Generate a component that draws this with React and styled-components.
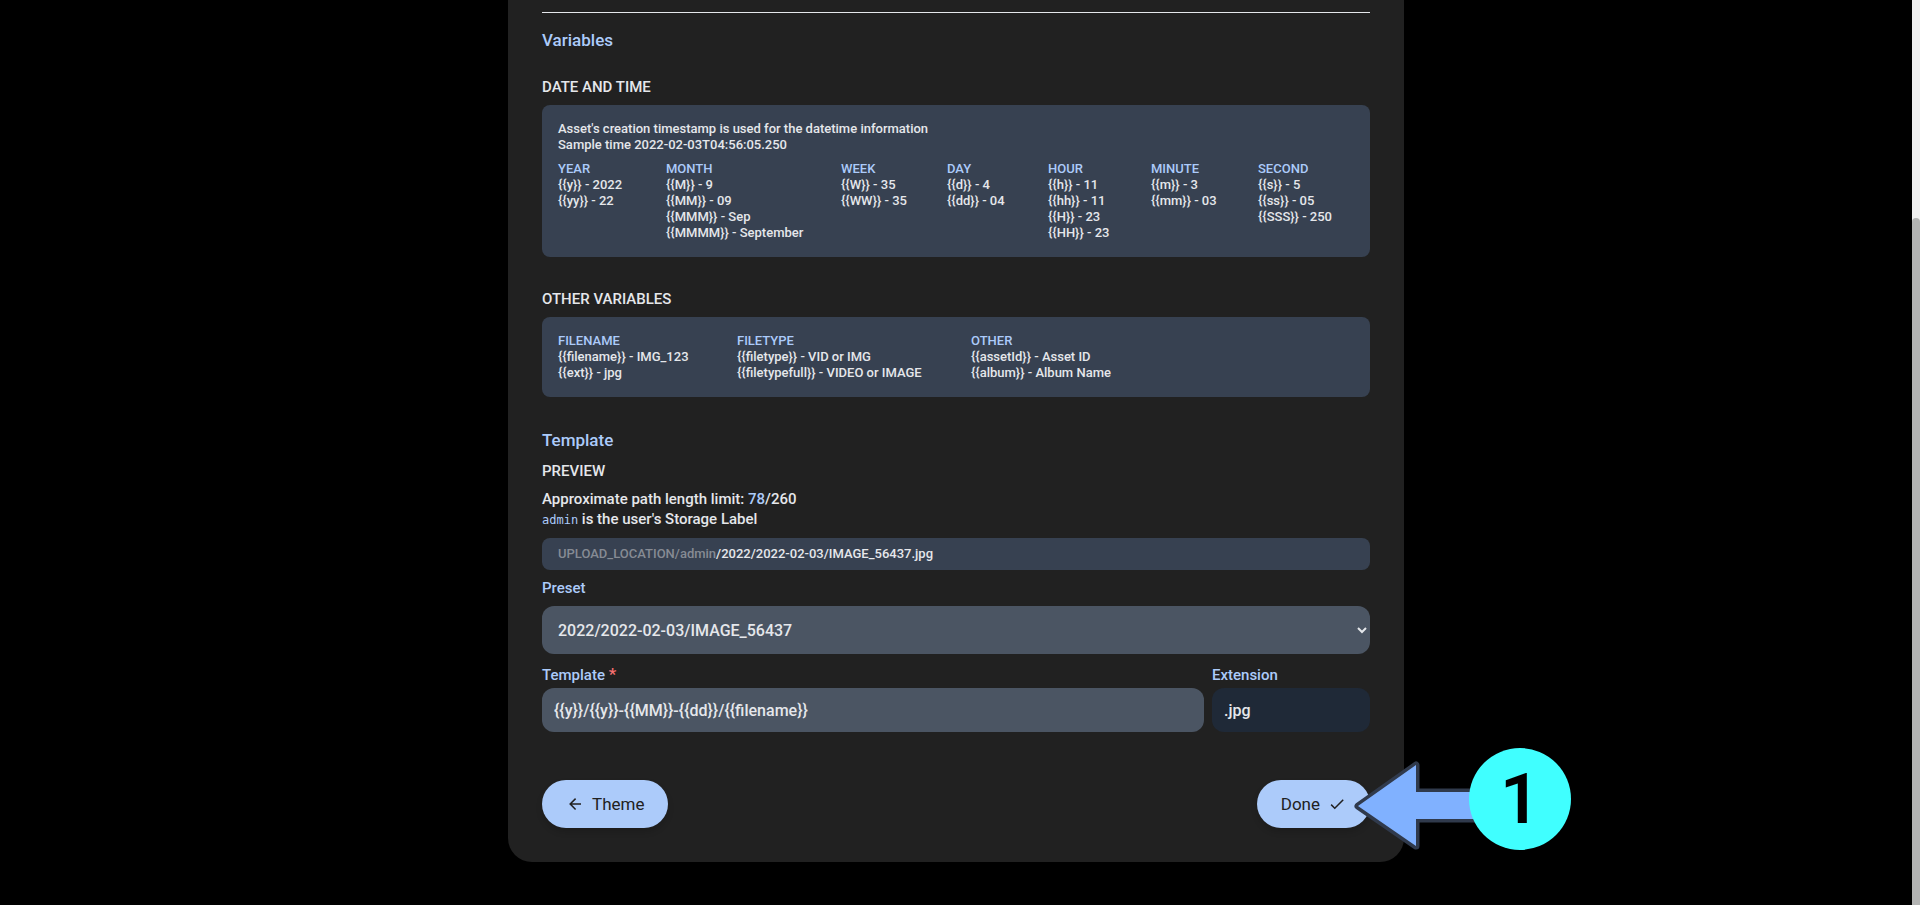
import React from 'react';
import styled, { createGlobalStyle } from 'styled-components';

const GlobalStyle = createGlobalStyle`
  *, *::before, *::after { box-sizing: border-box; }
  body {
    margin: 0;
    background: #000;
    color: #e5e7eb;
    font: 500 15px/22px Roboto, "Liberation Sans", sans-serif;
  }
  h2, h3, h4, p, ul { margin: 0; padding: 0; font-weight: inherit; }
  ul { list-style: none; }
  button, input, select { font: inherit; color: inherit; border: 0; }
`;

const primary = '#accbfa';

const Page = styled.div`
  display: flex;
  min-height: 100vh;
  overflow-x: hidden;
`;

const Main = styled.main`
  flex: 1;
  display: flex;
  align-items: flex-start;
  justify-content: center;
`;

const ScrollTrack = styled.div`
  display: flex;
  width: 8px;
  padding-top: 218px;
  background: #f1f1f1;
`;

const ScrollThumb = styled.div`
  flex: 1;
  border-radius: 16px 16px 0 0;
  background: #b3b4b3;
`;

const Card = styled.section`
  width: 100%;
  max-width: 896px;
  padding: 12px 34px 34px;
  border-radius: 0 0 24px 24px;
  background: #212121;
`;

const Divider = styled.hr`
  height: 1px;
  margin: 0 0 15px;
  border: 0;
  background: #e5e7eb;
`;

const Heading = styled.h2`
  color: ${primary};
  font-size: 17px;
  line-height: 24px;
`;

const Section = styled.section`
  display: flex;
  flex-direction: column;
  gap: 7px;
  margin-top: ${({ $space }) => $space}px;
`;

const TemplateBlock = styled.section`
  margin-top: 31px;
`;

const Caption = styled.h3`
  font-size: 15px;
  text-transform: uppercase;
`;

const Panel = styled.div`
  padding: 16px;
  border-radius: 8px;
  background: #374151;
  font-size: 13px;
  line-height: 16px;
`;

const Note = styled.div`
  margin-bottom: 8px;
`;

const Columns = styled.div`
  display: grid;
  grid-template-columns: ${({ $tracks }) => $tracks};
  white-space: nowrap;
`;

const ColumnTitle = styled.h4`
  color: ${primary};
  text-transform: uppercase;
`;

const PathInfo = styled.div`
  line-height: 20px;
`;

const Accent = styled.span`
  color: ${primary};
`;

const Code = styled.code`
  color: ${primary};
  font: 400 12px "DejaVu Sans Mono", monospace;
`;

const PathPreview = styled.p`
  padding: 8px 16px;
  margin-top: 2px;
  border-radius: 8px;
  background: #374151;
  font-size: 13px;
  line-height: 16px;
`;

const PathRoot = styled.span`
  color: #868b94;
`;

const Form = styled.form`
  display: flex;
  flex-direction: column;
  margin-top: 7px;
`;

const Label = styled.label`
  color: ${primary};
`;

const Required = styled.span`
  color: #f87171;
  font-size: 17px;
  line-height: 16px;
`;

const Select = styled.select`
  width: 100%;
  height: 48px;
  margin-top: 7px;
  padding: 12px;
  border-radius: 12px;
  background: #4b5563;
  font-size: 16px;
`;

const FieldRow = styled.div`
  display: flex;
  gap: 8px;
  margin-top: 10px;
`;

const Field = styled.div`
  display: flex;
  flex-direction: column;
  gap: 2px;
  flex: ${({ $grow }) => ($grow ? '1' : '0 0 158px')};
  min-width: 0;
`;

const Input = styled.input`
  width: 100%;
  height: 44px;
  padding: 12px;
  border-radius: 12px;
  background: ${({ disabled }) => (disabled ? '#1f2937' : '#4b5563')};
  font-size: 16px;
`;

const Actions = styled.div`
  display: flex;
  justify-content: space-between;
  margin-top: 48px;
`;

const Button = styled.button`
  display: flex;
  align-items: center;
  gap: 8px;
  height: 48px;
  padding: 0 24px;
  border-radius: 24px;
  background: ${primary};
  color: #212121;
  font-size: 17px;
  font-weight: 400;
  box-shadow: 0 4px 6px rgba(0, 0, 0, 0.15);
`;

const Icon = styled.svg`
  width: 18px;
  height: 18px;
  fill: currentColor;
`;

const DoneAnchor = styled.div`
  position: relative;
`;

const Callout = styled.div`
  position: absolute;
  top: -32px;
  left: calc(100% - 16px);
  display: flex;
  align-items: flex-start;
  pointer-events: none;
`;

const CalloutArrow = styled.svg`
  flex: none;
  width: 132px;
  height: 91px;
  margin: 12px -17px 0 0;
`;

const CalloutNumber = styled.span`
  position: relative;
  display: flex;
  align-items: center;
  justify-content: center;
  flex: none;
  width: 102px;
  height: 102px;
  border-radius: 50%;
  background: #40ffff;
  color: #000;
  font-size: 70px;
  font-weight: 600;
  line-height: 102px;
`;

const dateTime = [
  ['Year', '{{y}} - 2022', '{{yy}} - 22'],
  ['Month', '{{M}} - 9', '{{MM}} - 09', '{{MMM}} - Sep', '{{MMMM}} - September'],
  ['Week', '{{W}} - 35', '{{WW}} - 35'],
  ['Day', '{{d}} - 4', '{{dd}} - 04'],
  ['Hour', '{{h}} - 11', '{{hh}} - 11', '{{H}} - 23', '{{HH}} - 23'],
  ['Minute', '{{m}} - 3', '{{mm}} - 03'],
  ['Second', '{{s}} - 5', '{{ss}} - 05', '{{SSS}} - 250'],
];

const others = [
  ['Filename', '{{filename}} - IMG_123', '{{ext}} - jpg'],
  ['Filetype', '{{filetype}} - VID or IMG', '{{filetypefull}} - VIDEO or IMAGE'],
  ['Other', '{{assetId}} - Asset ID', '{{album}} - Album Name'],
];

function VariableColumns({ groups, tracks }) {
  return (
    <Columns $tracks={tracks}>
      {groups.map(([title, ...items]) => (
        <div key={title}>
          <ColumnTitle>{title}</ColumnTitle>
          <ul>
            {items.map((item) => (
              <li key={item}>{item}</li>
            ))}
          </ul>
        </div>
      ))}
    </Columns>
  );
}

export default function App() {
  return (
    <Page>
      <GlobalStyle />
      <Main>
        <Card>
          <Divider />
          <Heading>Variables</Heading>
          <Section $space={24}>
            <Caption>Date and time</Caption>
            <Panel>
              <Note>
                <p>Asset's creation timestamp is used for the datetime information</p>
                <p>Sample time 2022-02-03T04:56:05.250</p>
              </Note>
              <VariableColumns
                groups={dateTime}
                tracks="108px 175px 106px 101px 103px 107px 1fr"
              />
            </Panel>
          </Section>
          <Section $space={31}>
            <Caption>Other variables</Caption>
            <Panel>
              <VariableColumns groups={others} tracks="179px 234px 1fr" />
            </Panel>
          </Section>

          <TemplateBlock>
            <Heading>Template</Heading>
            <Section $space={8}>
              <Caption>Preview</Caption>
              <PathInfo>
                <p>
                  Approximate path length limit: <Accent>78</Accent>/260
                </p>
                <p>
                  <Code>admin</Code> is the user's Storage Label
                </p>
              </PathInfo>
              <PathPreview>
                <PathRoot>UPLOAD_LOCATION/admin</PathRoot>/2022/2022-02-03/IMAGE_56437.jpg
              </PathPreview>
            </Section>
            <Form onSubmit={(event) => event.preventDefault()}>
              <Label htmlFor="preset">Preset</Label>
              <Select id="preset">
                <option>2022/2022-02-03/IMAGE_56437</option>
              </Select>
              <FieldRow>
                <Field $grow>
                  <Label htmlFor="template">
                    Template <Required>*</Required>
                  </Label>
                  <Input
                    id="template"
                    type="text"
                    required
                    defaultValue="{{y}}/{{y}}-{{MM}}-{{dd}}/{{filename}}"
                  />
                </Field>
                <Field>
                  <Label htmlFor="extension">Extension</Label>
                  <Input id="extension" type="text" disabled defaultValue=".jpg" />
                </Field>
              </FieldRow>
            </Form>
          </TemplateBlock>

          <Actions>
            <Button type="button">
              <Icon viewBox="0 0 24 24" aria-hidden="true">
                <path d="M20,11V13H8L13.5,18.5L12.08,19.92L4.16,12L12.08,4.08L13.5,5.5L8,11H20Z" />
              </Icon>
              Theme
            </Button>
            <DoneAnchor>
              <Button type="button">
                Done
                <Icon viewBox="0 0 24 24" aria-hidden="true">
                  <path d="M21,7L9,19L3.5,13.5L4.91,12.09L9,16.17L19.59,5.59L21,7Z" />
                </Icon>
              </Button>
              <Callout>
                <CalloutArrow viewBox="0 0 132 91" aria-hidden="true">
                  <path
                    d="M4 46L62 5V32H140V59H62V86Z"
                    fill="#80b1ff"
                    stroke="#303a4c"
                    strokeWidth="7"
                    strokeLinejoin="round"
                    paintOrder="stroke"
                  />
                </CalloutArrow>
                <CalloutNumber>1</CalloutNumber>
              </Callout>
            </DoneAnchor>
          </Actions>
        </Card>
      </Main>
      <ScrollTrack aria-hidden="true">
        <ScrollThumb />
      </ScrollTrack>
    </Page>
  );
}
